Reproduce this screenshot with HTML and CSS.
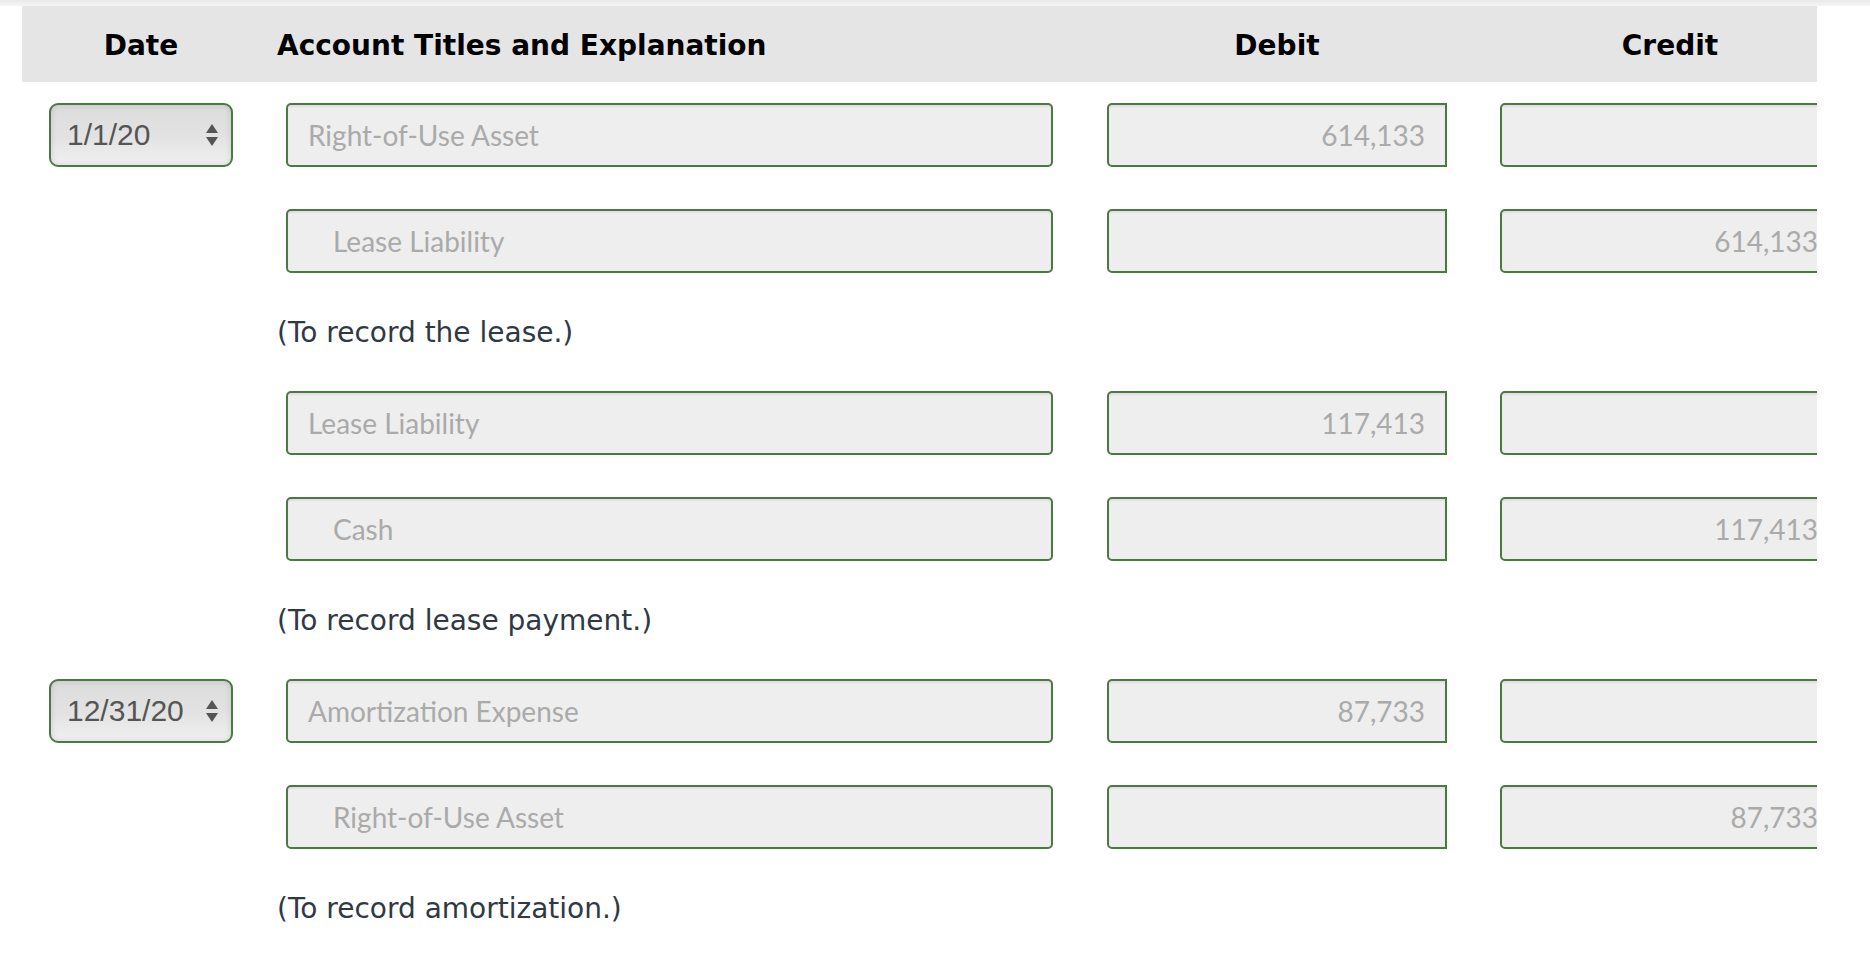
FILE: index.html
```html
<!DOCTYPE html>
<html lang="en">
<head>
    <meta charset="UTF-8">
    <title>Journal Entries</title>
    <link rel="stylesheet" href="styles.css">
</head>
<body>

    <div class="top-shade"></div>

    <div class="journal">

        <!-- Column headings -->
        <div class="head-row">
            <div class="h-date">Date</div>
            <div class="h-account">Account Titles and Explanation</div>
            <div class="h-debit">Debit</div>
            <div class="h-credit">Credit</div>
        </div>

        <!-- Entry 1 -->
        <div class="entry-row first">
            <div class="date-cell">
                <div class="date-select">
                    <span>1/1/20</span>
                    <svg class="arrows" width="14" height="24" viewBox="0 0 14 24"><path d="M7 1 L13 10 L1 10 Z M1 14 L13 14 L7 23 Z" fill="#555"/></svg>
                </div>
            </div>
            <div class="field account">Right-of-Use Asset</div>
            <div class="field debit">614,133</div>
            <div class="field credit"></div>
        </div>
        <div class="entry-row">
            <div class="date-cell"></div>
            <div class="field account indent">Lease Liability</div>
            <div class="field debit"></div>
            <div class="field credit">614,133</div>
        </div>
        <div class="explain">(To record the lease.)</div>

        <!-- Entry 2 -->
        <div class="entry-row">
            <div class="date-cell"></div>
            <div class="field account">Lease Liability</div>
            <div class="field debit">117,413</div>
            <div class="field credit"></div>
        </div>
        <div class="entry-row">
            <div class="date-cell"></div>
            <div class="field account indent">Cash</div>
            <div class="field debit"></div>
            <div class="field credit">117,413</div>
        </div>
        <div class="explain">(To record lease payment.)</div>

        <!-- Entry 3 -->
        <div class="entry-row">
            <div class="date-cell">
                <div class="date-select">
                    <span>12/31/20</span>
                    <svg class="arrows" width="14" height="24" viewBox="0 0 14 24"><path d="M7 1 L13 10 L1 10 Z M1 14 L13 14 L7 23 Z" fill="#555"/></svg>
                </div>
            </div>
            <div class="field account">Amortization Expense</div>
            <div class="field debit">87,733</div>
            <div class="field credit"></div>
        </div>
        <div class="entry-row">
            <div class="date-cell"></div>
            <div class="field account indent">Right-of-Use Asset</div>
            <div class="field debit"></div>
            <div class="field credit">87,733</div>
        </div>
        <div class="explain">(To record amortization.)</div>

    </div>

</body>
</html>
```

FILE: styles.css
```css
body {
    margin: 0;
    padding: 0;
    background-color: #fff;
    font-family: Lato, "Open Sans", Arial, sans-serif;
}

.top-shade {
    height: 6px;
    background: linear-gradient(to bottom, #e9e9e9, #f6f6f6);
}

/* Journal table */
.journal {
    width: 1795px;
    margin-left: 22px;
    overflow: hidden;
}

.head-row {
    display: flex;
    align-items: center;
    height: 76px;
    padding-top: 2px;
    box-sizing: border-box;
    background-color: #e5e5e5;
    font-family: "DejaVu Sans", Verdana, sans-serif;
    font-weight: 700;
    font-size: 28px;
    color: #000;
}

.head-row div {
    flex-shrink: 0;
}

.h-date {
    width: 184px;
    margin-left: 27px;
    text-align: center;
}

.h-account {
    width: 830px;
    margin-left: 44px;
}

.h-debit {
    width: 340px;
    text-align: center;
}

.h-credit {
    width: 340px;
    margin-left: 53px;
    text-align: center;
}

/* Entry rows */
.entry-row {
    display: flex;
    height: 64px;
    margin-bottom: 42px;
}

.entry-row.first {
    margin-top: 21px;
}

.date-cell {
    width: 264px;
    flex-shrink: 0;
}

.date-select {
    display: flex;
    align-items: center;
    justify-content: space-between;
    box-sizing: border-box;
    width: 184px;
    height: 64px;
    margin-left: 27px;
    padding: 0 12px 0 16px;
    border: 2px solid #4b7843;
    border-radius: 9px;
    background: linear-gradient(to bottom, #dcdcdc, #e3e3e3 55%, #f1f1f1);
    box-shadow: inset 0 0 6px rgba(0, 0, 0, 0.12);
    font-family: "Liberation Sans", Arial, sans-serif;
    font-size: 30px;
    color: #555;
}

.field {
    box-sizing: border-box;
    flex-shrink: 0;
    height: 64px;
    line-height: 60px;
    border: 2px solid #4b7843;
    border-radius: 5px;
    background-color: #eee;
    box-shadow: inset 0 2px 2px rgba(0, 0, 0, 0.06);
    color: #aaa;
    font-size: 28px;
    white-space: nowrap;
}

.field.account {
    width: 767px;
    padding-left: 20px;
}

.field.account.indent {
    padding-left: 45px;
}

.field.debit,
.field.credit {
    width: 340px;
    padding-right: 20px;
    text-align: right;
}

.field.debit {
    margin-left: 54px;
    border-radius: 5px 0 0 5px;
}

.field.credit {
    margin-left: 53px;
}

/* Explanation lines */
.explain {
    height: 36px;
    line-height: 36px;
    margin-bottom: 40px;
    padding-left: 255px;
    font-family: "DejaVu Sans", Verdana, sans-serif;
    font-size: 28px;
    color: #2f3944;
}
```
